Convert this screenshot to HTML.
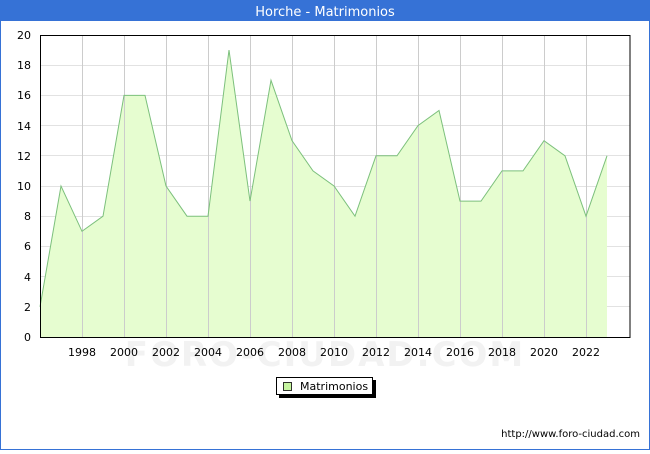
<!DOCTYPE html>
<html><head><meta charset="utf-8"><style>
body{margin:0;width:650px;height:450px;overflow:hidden;background:#fff;font-family:"DejaVu Sans","Liberation Sans",sans-serif}
</style></head><body>
<svg width="650" height="450" xmlns="http://www.w3.org/2000/svg" font-family="DejaVu Sans, Liberation Sans, sans-serif">
<rect x="0.5" y="0.5" width="649" height="449" fill="#fff" stroke="#3672d6"/>
<rect x="0" y="0" width="650" height="21" fill="#3672d6"/>
<text x="325" y="16" text-anchor="middle" fill="#fff" font-size="13">Horche - Matrimonios</text>
<g stroke="#e2e2e2" stroke-width="1">
<line x1="40" y1="306.5" x2="630" y2="306.5"/><line x1="40" y1="276.5" x2="630" y2="276.5"/><line x1="40" y1="246.5" x2="630" y2="246.5"/><line x1="40" y1="216.5" x2="630" y2="216.5"/><line x1="40" y1="186.5" x2="630" y2="186.5"/><line x1="40" y1="155.5" x2="630" y2="155.5"/><line x1="40" y1="125.5" x2="630" y2="125.5"/><line x1="40" y1="95.5" x2="630" y2="95.5"/><line x1="40" y1="65.5" x2="630" y2="65.5"/>
</g>
<polygon fill="#e6fdd0" points="40,337 40,306.8 61,186 82,231.3 103,216.2 124,95.4 145,95.4 166,186 187,216.2 208,216.2 229,50.1 250,201.1 271,80.3 292,140.7 313,170.9 334,186 355,216.2 376,155.8 397,155.8 418,125.6 439,110.5 460,201.1 481,201.1 502,170.9 523,170.9 544,140.7 565,155.8 586,216.2 607,155.8 607,337"/>
<g stroke="#cccccc" stroke-width="1">
<line x1="82.5" y1="35" x2="82.5" y2="337"/><line x1="124.5" y1="35" x2="124.5" y2="337"/><line x1="166.5" y1="35" x2="166.5" y2="337"/><line x1="208.5" y1="35" x2="208.5" y2="337"/><line x1="250.5" y1="35" x2="250.5" y2="337"/><line x1="292.5" y1="35" x2="292.5" y2="337"/><line x1="334.5" y1="35" x2="334.5" y2="337"/><line x1="376.5" y1="35" x2="376.5" y2="337"/><line x1="418.5" y1="35" x2="418.5" y2="337"/><line x1="460.5" y1="35" x2="460.5" y2="337"/><line x1="502.5" y1="35" x2="502.5" y2="337"/><line x1="544.5" y1="35" x2="544.5" y2="337"/><line x1="586.5" y1="35" x2="586.5" y2="337"/>
</g>
<polyline fill="none" stroke="#7cc07c" stroke-width="1" points="40,306.8 61,186 82,231.3 103,216.2 124,95.4 145,95.4 166,186 187,216.2 208,216.2 229,50.1 250,201.1 271,80.3 292,140.7 313,170.9 334,186 355,216.2 376,155.8 397,155.8 418,125.6 439,110.5 460,201.1 481,201.1 502,170.9 523,170.9 544,140.7 565,155.8 586,216.2 607,155.8"/>
<rect x="40.5" y="35.5" width="589.5" height="302" fill="none" stroke="#000"/>
<text x="325" y="366" text-anchor="middle" fill="#f2f2f2" font-size="34" font-weight="bold" letter-spacing="2">FORO-CIUDAD.COM</text>
<g font-size="11" fill="#000" text-anchor="end">
<text x="31" y="341">0</text><text x="31" y="311">2</text><text x="31" y="281">4</text><text x="31" y="250">6</text><text x="31" y="220">8</text><text x="31" y="190">10</text><text x="31" y="160">12</text><text x="31" y="130">14</text><text x="31" y="99">16</text><text x="31" y="69">18</text><text x="31" y="39">20</text>
</g>
<g font-size="11" fill="#000" text-anchor="middle">
<text x="82" y="356">1998</text><text x="124" y="356">2000</text><text x="166" y="356">2002</text><text x="208" y="356">2004</text><text x="250" y="356">2006</text><text x="292" y="356">2008</text><text x="334" y="356">2010</text><text x="376" y="356">2012</text><text x="418" y="356">2014</text><text x="460" y="356">2016</text><text x="502" y="356">2018</text><text x="544" y="356">2020</text><text x="586" y="356">2022</text>
</g>
<rect x="279" y="380" width="97" height="18" fill="#000"/>
<rect x="276.5" y="377.5" width="96" height="17" fill="#fff" stroke="#000"/>
<rect x="283.5" y="382.5" width="8" height="8" fill="#c6f5a0" stroke="#000" stroke-width="0.8"/>
<text x="300" y="390" font-size="11" fill="#000">Matrimonios</text>
<text x="640" y="437" text-anchor="end" font-size="10" fill="#000">http://www.foro-ciudad.com</text>
</svg>
</body></html>
